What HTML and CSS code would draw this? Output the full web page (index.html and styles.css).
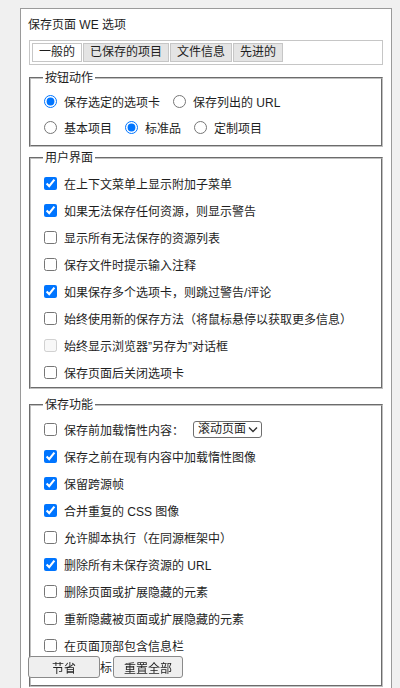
FILE: index.html
```html
<!DOCTYPE html>
<html lang="zh-CN">
<head>
<meta charset="utf-8">
<title>保存页面 WE 选项</title>
<link rel="stylesheet" href="styles.css">
</head>
<body>
<div class="panel">
  <div class="title">保存页面 WE 选项</div>
  <div class="tabs">
    <span class="tab active">一般的</span>
    <span class="tab">已保存的项目</span>
    <span class="tab">文件信息</span>
    <span class="tab">先进的</span>
  </div>

  <fieldset class="group group-buttons">
    <legend>按钮动作</legend>
    <div class="row radio-row">
      <label class="opt"><input type="radio" name="act" checked><span>保存选定的选项卡</span></label>
      <label class="opt"><input type="radio" name="act"><span>保存列出的 URL</span></label>
    </div>
    <div class="row radio-row">
      <label class="opt"><input type="radio" name="lvl"><span>基本项目</span></label>
      <label class="opt"><input type="radio" name="lvl" checked><span>标准品</span></label>
      <label class="opt"><input type="radio" name="lvl"><span>定制项目</span></label>
    </div>
  </fieldset>

  <fieldset class="group group-ui">
    <legend>用户界面</legend>
    <label class="row"><input type="checkbox" checked><span>在上下文菜单上显示附加子菜单</span></label>
    <label class="row"><input type="checkbox" checked><span>如果无法保存任何资源，则显示警告</span></label>
    <label class="row"><input type="checkbox"><span>显示所有无法保存的资源列表</span></label>
    <label class="row"><input type="checkbox"><span>保存文件时提示输入注释</span></label>
    <label class="row"><input type="checkbox" checked><span>如果保存多个选项卡，则跳过警告/评论</span></label>
    <label class="row"><input type="checkbox"><span>始终使用新的保存方法（将鼠标悬停以获取更多信息）</span></label>
    <label class="row"><input type="checkbox" disabled><span>始终显示浏览器”另存为”对话框</span></label>
    <label class="row"><input type="checkbox"><span>保存页面后关闭选项卡</span></label>
  </fieldset>

  <fieldset class="group group-save">
    <legend>保存功能</legend>
    <div class="row">
      <label class="opt"><input type="checkbox"><span>保存前加载惰性内容：</span></label>
      <span class="select"><span>滚动页面</span><svg width="10" height="7" viewBox="0 0 10 7"><polyline points="1,1.5 5,5.5 9,1.5" fill="none" stroke="#333" stroke-width="1.4"/></svg></span>
    </div>
    <label class="row"><input type="checkbox" checked><span>保存之前在现有内容中加载惰性图像</span></label>
    <label class="row"><input type="checkbox" checked><span>保留跨源帧</span></label>
    <label class="row"><input type="checkbox" checked><span>合并重复的 CSS 图像</span></label>
    <label class="row"><input type="checkbox"><span>允许脚本执行（在同源框架中）</span></label>
    <label class="row"><input type="checkbox" checked><span>删除所有未保存资源的 URL</span></label>
    <label class="row"><input type="checkbox"><span>删除页面或扩展隐藏的元素</span></label>
    <label class="row"><input type="checkbox"><span>重新隐藏被页面或扩展隐藏的元素</span></label>
    <label class="row"><input type="checkbox"><span>在页面顶部包含信息栏</span></label>
    <label class="row row-under"><input type="checkbox"><span>显示图标</span></label>
  </fieldset>
</div>

<div class="footer">
  <button class="btn btn-save">节省</button>
  <button class="btn btn-reset">重置全部</button>
</div>
</body>
</html>
```

FILE: styles.css
```css
html, body {
  margin: 0;
  padding: 0;
  background: #f0f0f0;
  overflow: hidden;
}

body {
  font-family: "Liberation Sans", "Noto Sans CJK SC", sans-serif;
  font-size: 12px;
  color: #1e1e1e;
  height: 688px;
}

.panel {
  margin: 8px 8px 0 20px;
  background: #fff;
  border: 1px solid #9a9a9a;
  padding: 8px 8px 40px 7px;
  min-height: 720px;
  box-sizing: border-box;
}

.title {
  line-height: 16px;
  margin-bottom: 7px;
}

.tabs {
  display: flex;
  gap: 1px;
  border: 1px solid #c6c6c6;
  padding: 2px;
  margin-left: 1px;
}

.tab {
  display: block;
  line-height: 17px;
  padding: 0 6px;
  border: 1px solid #c6c6c6;
  background: #e4e4e4;
}

.tab.active {
  background: #fff;
}

.group {
  margin: 0 0 0 1px;
  padding: 2px 9px 5px;
  border: 2px groove rgb(192, 192, 192);
  min-width: 0;
}

.group legend {
  line-height: 16px;
  padding: 0 2px;
  margin-left: 3px;
}

.group-buttons {
  margin-top: 5px;
}

.group-ui {
  margin-top: 3px;
  padding-top: 4px;
  padding-bottom: 1px;
}

.group-save {
  margin-top: 8px;
  padding-top: 3px;
}

.row {
  display: flex;
  align-items: center;
  height: 27px;
}

.group-buttons .row {
  height: 26px;
}

.row-under {
  margin-top: -6px;
}

.opt {
  display: flex;
  align-items: center;
  margin-right: 9px;
}

.row input,
.opt input {
  width: 13px;
  height: 13px;
  margin: 0 7px 0 4px;
  flex: none;
}

.select {
  display: inline-flex;
  align-items: center;
  justify-content: space-between;
  box-sizing: border-box;
  width: 69px;
  height: 17px;
  margin-left: 0;
  padding: 0 3px 0 4px;
  border: 1px solid #6e6e6e;
  border-radius: 3px;
  background: #fff;
  line-height: 15px;
}

.footer {
  position: fixed;
  left: 28px;
  bottom: 10px;
  display: flex;
  gap: 13px;
}

.btn {
  font-family: "Liberation Sans", "Noto Sans CJK SC", sans-serif;
  font-size: 12px;
  color: #1e1e1e;
  height: 22px;
  padding: 0;
  background: #efefef;
  border: 1px solid #8a8a8a;
  border-radius: 3px;
}

.btn-save {
  width: 72px;
}

.btn-reset {
  width: 70px;
}
```
